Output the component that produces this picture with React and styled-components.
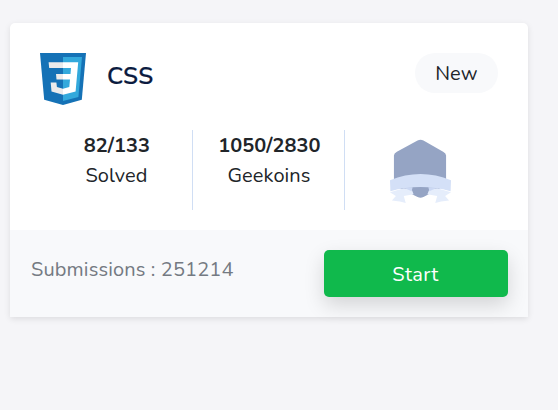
import React from 'react';
import styled, { createGlobalStyle } from 'styled-components';

const GlobalStyle = createGlobalStyle`
  * { box-sizing: border-box; }
  body {
    margin: 0;
    min-height: 410px;
    background: #f5f5f8;
    color: #212529;
    font-family: Nunito, Lato, "Open Sans", sans-serif;
    font-size: 20px;
    line-height: 30px;
  }
`;

const Page = styled.main`
  padding: 23px 30px 0 10px;
`;

const Card = styled.article`
  height: 294px;
  display: flex;
  flex-direction: column;
  background: #fff;
  border-radius: 5px 5px 2px 2px;
  box-shadow: 0 2px 6px rgba(0, 0, 0, 0.1);
`;

const Body = styled.div`
  height: 207px;
  padding: 30px 30px 0;
`;

const Header = styled.header`
  display: flex;
  align-items: flex-start;
  height: 77px;
`;

const Title = styled.h2`
  flex: 1;
  margin: 6px 0 0 21px;
  color: #0b1b3f;
  font-size: 24px;
  font-weight: 600;
  letter-spacing: 0.2px;
  line-height: 34px;
  -webkit-text-stroke: 0.2px #0b1b3f;
`;

const Tag = styled.span`
  width: 83px;
  height: 40px;
  border-radius: 20px;
  background: #f8f9fb;
  letter-spacing: 0.2px;
  line-height: 42px;
  text-align: center;
`;

const Stats = styled.div`
  display: grid;
  grid-template-columns: 153px 152px 153px;
  height: 80px;
`;

const Stat = styled.div`
  padding: 1px 0 0 2px;
  border-right: 1px solid #d0def4;
  text-align: center;
`;

const Value = styled.div`
  font-weight: 700;
`;

const Label = styled.div`
  padding-right: 1px;
  letter-spacing: 0.1px;
`;

const BadgeCell = styled.div`
  display: flex;
  justify-content: center;
  padding: 9px 2px 0 0;
`;

const Footer = styled.footer`
  flex: 1;
  display: flex;
  justify-content: space-between;
  padding: 20px 20px 0;
  background: #f8f9fb;
`;

const Submissions = styled.span`
  padding-left: 1px;
  line-height: 39px;
  letter-spacing: 0.14px;
  color: #747a82;
`;

const StartButton = styled.button`
  width: 184px;
  height: 47px;
  padding: 2px 1px 0 0;
  border: 0;
  border-radius: 5px;
  background: #10b94c;
  color: #fff;
  font: inherit;
  letter-spacing: 0.4px;
  line-height: 45px;
  box-shadow: 0 8px 20px rgba(0, 0, 0, 0.15);
`;

const CssLogo = () => (
  <svg width="46" height="52" viewBox="0 0 46 52" aria-hidden="true">
    <path fill="#1572b6" d="M0 0h46l-4.2 46.7L23 52 4.2 46.7z" />
    <path fill="#33a9dc" d="M23 4h19l-3.6 40L23 48z" />
    <path fill="#ebebeb" d="M23 9.2H8.6l.6 5.8H23zM23 21h-7l.5 5.5H23zM16.4 29.5h-5.7l.8 9L23 41.7v-6l-6.1-1.8z" />
    <path fill="#fff" d="M23 9.2h15.2L35.6 38.5 23 41.7v-6l6.3-1.8.7-7.4h-7V21l7.5-.1.5-5.9h-8z" />
  </svg>
);

const RankBadge = () => (
  <svg width="61" height="65" viewBox="0 0 62 66" aria-hidden="true">
    <path fill="#95a4c4" d="M28 1.6q3-1.6 6 0l20 11.2q3 1.6 3 4V44q0 3-3 4.6L34 59q-3 1.6-6 0L7 48.6Q4 47 4 44V16.8q0-2.4 3-4z" />
    <path fill="#e5edfb" d="M0 54l14-4 8 1 2 5-10 2 2 7-6-1.5-8-1 4-4.500zM62 54l-14-4-8 1-2 5 10 2-2 7 6-1.500 8-1-4-4.500z" />
    <path fill="#cbd8f3" d="M13 49l10 0-1 4zM49 49l-10 0 1 4z" />
    <path fill="#d4e0f7" d="M0 42q31-13 62 0l-.4 11q-30.600-8.500-61.200 0z" />
  </svg>
);

export default function App() {
  return (
    <>
      <GlobalStyle />
      <Page>
        <Card>
          <Body>
            <Header>
              <CssLogo />
              <Title>CSS</Title>
              <Tag>New</Tag>
            </Header>
            <Stats>
              <Stat>
                <Value>82/133</Value>
                <Label>Solved</Label>
              </Stat>
              <Stat>
                <Value>1050/2830</Value>
                <Label>Geekoins</Label>
              </Stat>
              <BadgeCell>
                <RankBadge />
              </BadgeCell>
            </Stats>
          </Body>
          <Footer>
            <Submissions>Submissions : 251214</Submissions>
            <StartButton type="button">Start</StartButton>
          </Footer>
        </Card>
      </Page>
    </>
  );
}
